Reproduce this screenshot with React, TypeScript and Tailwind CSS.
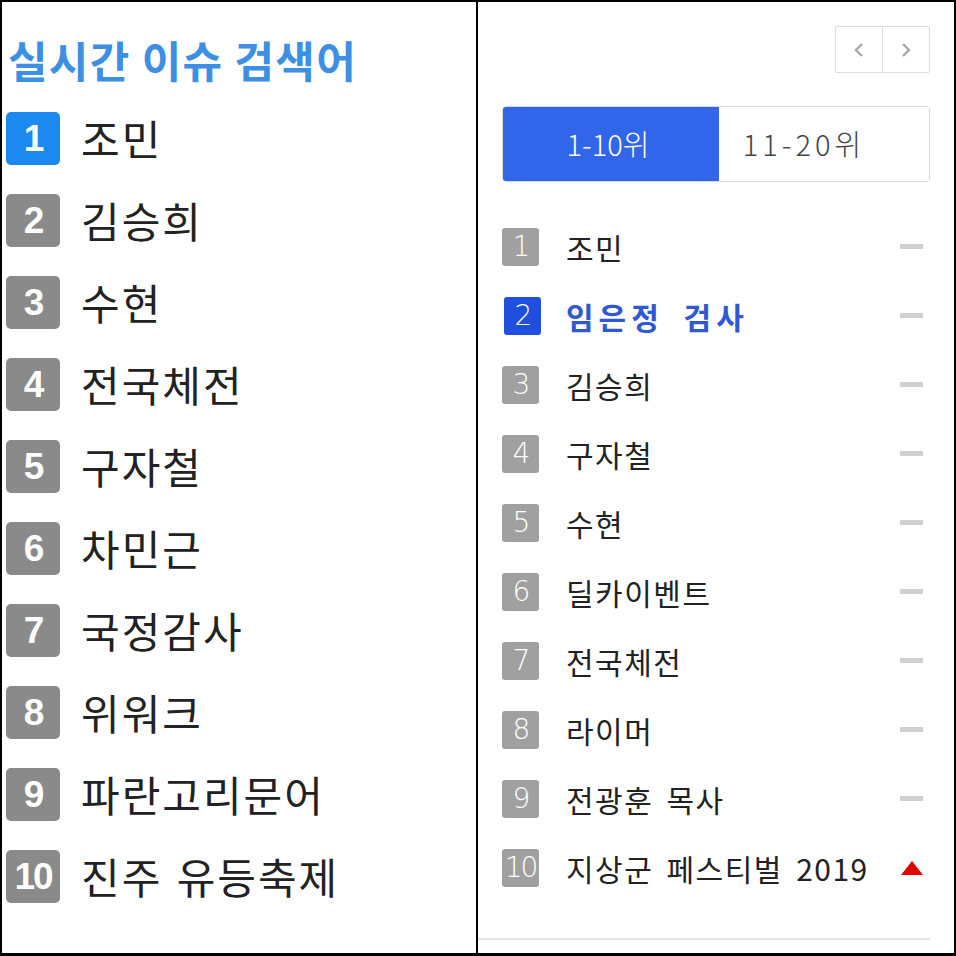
import React from "react";

const leftItems = ["조민", "김승희", "수현", "전국체전", "구자철", "차민근", "국정감사", "위워크", "파란고리문어", "진주 유등축제"];
const rightItems = ["조민", "임은정 검사", "김승희", "구자철", "수현", "딜카이벤트", "전국체전", "라이머", "전광훈 목사", "지상군 페스티벌 2019"];

const kr = { fontFamily: '"Noto Sans CJK KR", "Noto Sans", sans-serif' };

export default function App() {
  return (
    <div className="w-[956px] h-[956px] bg-white flex border-2 border-black border-b-[3px]" style={kr}>
      {/* Left panel */}
      <div className="w-[474px] h-full flex flex-col pl-[4px]">
        <div className="h-[95px] flex items-center pl-[2px] pt-[20px]">
          <h1 className="text-[43px] font-bold text-[#3c8fe2] tracking-[1.3px] leading-none whitespace-nowrap">실시간 이슈 검색어</h1>
        </div>
        <ul className="flex flex-col">
          {leftItems.map((t, i) => (
            <li key={t} className="h-[82px] flex items-center">
              <span
                className={`w-[54px] h-[53px] rounded-[5px] flex items-center justify-center text-white font-bold text-[37px] tracking-[-2px] leading-none ${i === 0 ? "bg-[#1c89f1]" : "bg-[#8a8a8a]"}`}
                style={{ fontFamily: '"Liberation Sans", Arial, sans-serif' }}
              >
                {i + 1}
              </span>
              <span className="ml-[21px] text-[42px] text-[#222] leading-none tracking-[2px] [word-spacing:3px] whitespace-nowrap">{t}</span>
            </li>
          ))}
        </ul>
      </div>
      {/* Divider */}
      <div className="w-[2px] h-full bg-black" />
      {/* Right panel */}
      <div className="flex-1 h-full flex flex-col px-[24px] pt-[24px]">
        <div className="flex justify-end">
          <div className="flex w-[95px] h-[47px] border border-[#dcdcdc] rounded-[2px]">
            <button className="flex-1 flex items-center justify-center border-r border-[#dcdcdc]">
              <svg width="12" height="16" viewBox="0 0 12 16"><path d="M9 2 L3 8 L9 14" fill="none" stroke="#a8a8a8" strokeWidth="2.4" /></svg>
            </button>
            <button className="flex-1 flex items-center justify-center">
              <svg width="12" height="16" viewBox="0 0 12 16"><path d="M3 2 L9 8 L3 14" fill="none" stroke="#a8a8a8" strokeWidth="2.4" /></svg>
            </button>
          </div>
        </div>
        <div className="mt-[33px] flex h-[76px] rounded-[4px] border border-[#d8d8d8] overflow-hidden">
          <div className="w-[216px] bg-[#3266ea] flex items-center justify-center pr-[6px] text-white text-[29px] font-light tracking-[0px]">1-10위</div>
          <div className="flex-1 bg-white flex items-center justify-center pr-[40px] text-[#444] text-[29px] font-light tracking-[4px]">11-20위</div>
        </div>
        <ul className="mt-[30px] flex flex-col">
          {rightItems.map((t, i) => (
            <li key={t} className="h-[69px] flex items-center">
              <span
                className={`w-[37px] h-[38px] rounded-[3px] flex items-center justify-center text-white text-[28px] leading-none tracking-[-2px] ${i === 1 ? "bg-[#1f4fdc] ml-[2px] mr-[-2px]" : "bg-[#a0a0a0]"}`}
                style={{ fontFamily: '"DejaVu Sans", sans-serif', fontWeight: 300 }}
              >
                {i + 1}
              </span>
              <span
                className={`ml-[27px] text-[30px] leading-none whitespace-nowrap ${i === 1 ? "text-[#2f58d2] font-bold tracking-[5px] [word-spacing:8px]" : "text-[#222] tracking-[1.5px] [word-spacing:5px]"}`}
              >
                {t}
              </span>
              <span className="ml-auto mr-[7px] flex items-center">
                {i === 9 ? (
                  <svg width="22" height="14" viewBox="0 0 22 14"><path d="M11 0 L22 14 L0 14 Z" fill="#e00000" /></svg>
                ) : (
                  <span className="block w-[23px] h-[5px] bg-[#d0d0d0]" />
                )}
              </span>
            </li>
          ))}
        </ul>
        <div className="mt-[36px] -ml-[24px] h-[2px] bg-[#e6e6e6]" />
      </div>
    </div>
  );
}
